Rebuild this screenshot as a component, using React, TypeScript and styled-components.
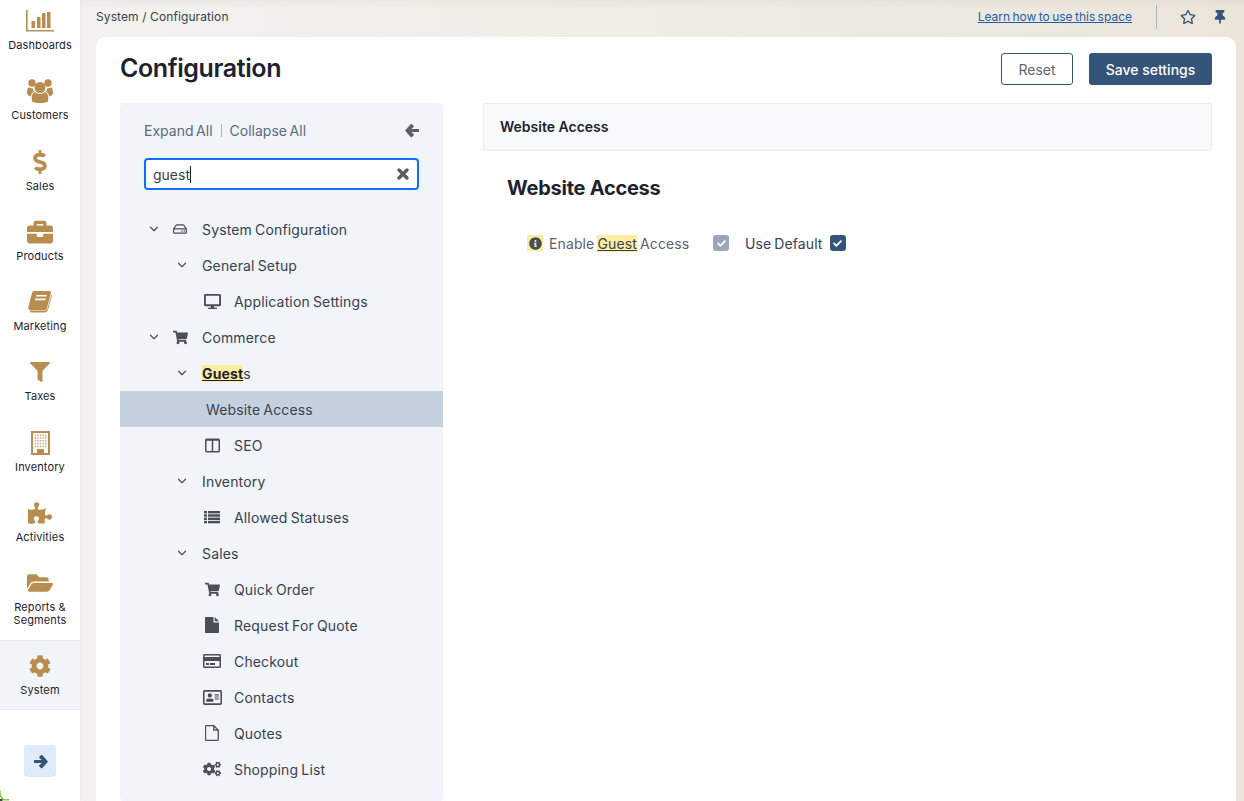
import React from "react";
import styled, { createGlobalStyle } from "styled-components";
import {
  FaDollarSign,
  FaBriefcase,
  FaFilter,
  FaPuzzlePiece,
  FaFolderOpen,
  FaCog,
  FaRegHdd,
  FaDesktop,
  FaShoppingCart,
  FaRegCreditCard,
  FaRegAddressCard,
  FaCogs,
  FaRegStar,
  FaThumbtack,
  FaInfoCircle,
  FaCheck,
} from "react-icons/fa";
import { LuChevronDown } from "react-icons/lu";

const GlobalStyle = createGlobalStyle`
  html, body {
    margin: 0;
    padding: 0;
    height: 100%;
    overflow: hidden;
  }
  body {
    font-family: "Inter", "Liberation Sans", sans-serif;
    color: #1c2230;
    background:
      linear-gradient(180deg, rgba(90, 80, 60, 0.05), rgba(90, 80, 60, 0) 8px),
      linear-gradient(90deg, #f4f3f0 0%, #efebe4 60%, #ebe5da 100%);
  }
`;

const Shell = styled.div`
  display: flex;
  height: 801px;
  overflow: hidden;
`;

const Sidebar = styled.aside`
  flex: 0 0 80px;
  background: #fff;
  display: flex;
  flex-direction: column;
  box-shadow: 1px 0 2px rgba(0, 0, 0, 0.03);
`;

const NavList = styled.nav`
  display: flex;
  flex-direction: column;
  padding-top: 5px;
`;

const NavItem = styled.div<{ $active?: boolean; $tall?: boolean }>`
  height: ${({ $active, $tall }) => ($active ? 70 : $tall ? 73 : 70.25)}px;
  box-sizing: border-box;
  display: flex;
  flex-direction: column;
  align-items: center;
  background: ${({ $active }) => ($active ? "#f1f4f9" : "transparent")};
  border-top: ${({ $active }) => ($active ? "1px solid #e6e9ee" : "0")};
  border-bottom: ${({ $active }) => ($active ? "1px solid #e6e9ee" : "0")};
  padding-top: ${({ $active }) => ($active ? 11 : 2)}px;
`;

const NavIcon = styled.div`
  height: 28px;
  display: flex;
  align-items: center;
  justify-content: center;
  color: #b98d50;
`;

const NavLabel = styled.div`
  margin-top: 4px;
  width: 78px;
  font-size: 11px;
  line-height: 13px;
  letter-spacing: 0.12px;
  text-align: center;
  color: #1c2230;
`;

const ExpandButton = styled.div`
  width: 32px;
  height: 32px;
  margin: 35px auto 0;
  border-radius: 4px;
  background: #deebf9;
  color: #34547a;
  display: flex;
  align-items: center;
  justify-content: center;
`;

const Content = styled.main`
  flex: 1;
  min-width: 0;
  padding: 0 8px 0 16px;
  display: flex;
  flex-direction: column;
`;

const TopBar = styled.header`
  height: 37px;
  flex: none;
  display: flex;
  align-items: center;
  justify-content: space-between;
  padding-bottom: 4px;
  box-sizing: border-box;
`;

const Breadcrumb = styled.div`
  font-size: 12px;
  letter-spacing: 0.1px;
  color: #39414f;
`;

const TopActions = styled.div`
  display: flex;
  align-items: center;
`;

const HelpLink = styled.a`
  font-size: 12px;
  color: #1f5ea8;
  text-decoration: underline;
  word-spacing: -1px;
`;

const Divider = styled.div`
  width: 1px;
  height: 24px;
  background: #a9b3c2;
  margin: 0 23px 0 24px;
`;

const TopIcon = styled.span<{ $last?: boolean }>`
  display: flex;
  color: #34547a;
  margin-right: ${({ $last }) => ($last ? "9px" : "17px")};
`;

const Card = styled.section`
  flex: 1;
  background: #fff;
  border-radius: 10px 10px 0 0;
  padding: 0 24px;
  display: flex;
  flex-direction: column;
  min-height: 0;
`;

const CardHeader = styled.div`
  height: 66px;
  flex: none;
  box-sizing: border-box;
  padding-bottom: 2px;
  display: flex;
  align-items: center;
  justify-content: space-between;
`;

const PageTitle = styled.h1`
  margin: 0 0 2px;
  font-size: 25px;
  font-weight: 600;
  letter-spacing: -0.4px;
  color: #1c2230;
`;

const ButtonRow = styled.div`
  display: flex;
  gap: 16px;
`;

const ResetButton = styled.button`
  width: 72px;
  height: 32px;
  border: 1px solid #34547a;
  border-radius: 3px;
  background: #fff;
  color: #5c6675;
  font: 14px "Inter", sans-serif;
`;

const SaveButton = styled.button`
  width: 123px;
  height: 32px;
  border: 0;
  border-radius: 3px;
  background: #34547a;
  color: #fff;
  font: 500 14px "Inter", sans-serif;
`;

const Columns = styled.div`
  flex: 1;
  display: flex;
  gap: 40px;
  min-height: 0;
`;

const TreePanel = styled.div`
  flex: 0 0 323px;
  background: #f1f4f9;
  border-radius: 4px;
  display: flex;
  flex-direction: column;
`;

const TreeTools = styled.div`
  display: flex;
  align-items: center;
  height: 55px;
  padding: 0 23px 0 24px;
`;

const ToolLink = styled.span`
  font-size: 14px;
  color: #5a6a80;
  word-spacing: -1.3px;
`;

const ToolSep = styled.span`
  width: 1px;
  height: 13px;
  background: #a9b3c2;
  margin: 0 8px;
`;

const BackIcon = styled.span`
  margin-left: auto;
  display: flex;
  color: #5a5f69;
`;

const SearchBox = styled.div`
  margin: 0 24px;
  height: 32px;
  box-sizing: border-box;
  border: 2px solid #0d6efd;
  border-radius: 4px;
  background: #fff;
  display: flex;
  align-items: center;
  padding: 0 8px 0 7px;
`;

const SearchText = styled.span`
  font-size: 14px;
  color: #39414f;
`;

const Caret = styled.span`
  width: 1px;
  height: 17px;
  background: #1c2230;
`;

const ClearIcon = styled.span`
  margin-left: auto;
  display: flex;
  color: #565b64;
`;

const Tree = styled.div`
  margin-top: 21px;
`;

const Row = styled.div<{ $indent: number; $selected?: boolean }>`
  height: 36px;
  display: flex;
  align-items: center;
  position: relative;
  background: ${({ $selected }) => ($selected ? "#c5d1df" : "transparent")};
  padding-left: ${({ $indent }) => $indent}px;
`;

const Chevron = styled.span<{ $level: number }>`
  position: absolute;
  display: flex;
  color: #4b5058;
  left: ${({ $level }) => ($level === 0 ? 27 : 55)}px;
`;

const RowIcon = styled.span<{ $level: number }>`
  position: absolute;
  display: flex;
  justify-content: center;
  width: 20px;
  left: ${({ $level }) => ($level === 2 ? 82 : 50)}px;
  color: #494e58;
`;

const RowLabel = styled.span`
  font-size: 14px;
  color: #39414f;
  letter-spacing: 0.15px;
  word-spacing: -1px;
  white-space: nowrap;
`;

const Match = styled.span`
  background: #fdeda0;
  font-weight: 700;
  color: #1c2230;
  text-decoration: underline;
`;

const MatchUnderlined = styled.span`
  background: #fdeda0;
  color: #39414f;
  text-decoration: underline;
`;

const Detail = styled.div`
  flex: 1;
  min-width: 0;
`;

const SectionBar = styled.div`
  height: 48px;
  box-sizing: border-box;
  display: flex;
  align-items: center;
  padding: 0 16px 1px;
  background: #f8f9fb;
  border: 1px solid #e9ecf0;
  border-radius: 3px;
  font-size: 14px;
  font-weight: 600;
  color: #1c2230;
`;

const SectionTitle = styled.h2`
  margin: 24px 0 0 24px;
  font-size: 20px;
  line-height: 26px;
  font-weight: 700;
  letter-spacing: -0.25px;
  color: #1c2230;
`;

const Field = styled.div`
  display: flex;
  align-items: center;
  margin: 34px 0 0 44px;
  height: 16px;
`;

const InfoMark = styled.span`
  width: 16px;
  height: 16px;
  background: #fdeda0;
  color: #494e58;
  display: flex;
  align-items: center;
  justify-content: center;
`;

const FieldLabel = styled.span`
  font-size: 14px;
  color: #5a6270;
  margin-left: 6px;
  letter-spacing: 0.12px;
  word-spacing: -1px;
  width: 164px;
  white-space: nowrap;
`;

const CheckBox = styled.span<{ $muted?: boolean }>`
  width: 16px;
  height: 16px;
  border-radius: 3px;
  background: ${({ $muted }) => ($muted ? "#9aa7ba" : "#34547a")};
  color: #fff;
  display: flex;
  align-items: center;
  justify-content: center;
`;

const DefaultLabel = styled.span`
  font-size: 14px;
  color: #39414f;
  margin: 0 7px 0 16px;
  letter-spacing: 0.1px;
  word-spacing: -1px;
`;

const CornerMark = styled.svg`
  position: fixed;
  left: 0;
  bottom: 0;
`;

const ChartIcon = () => (
  <svg width="28" height="22" viewBox="0 0 28 22" fill="#b98d50">
    <path d="M0 0h1.6v20H28v1.6H0z" />
    <rect x="5.5" y="11" width="3.5" height="7" />
    <rect x="11" y="7" width="3.5" height="11" />
    <rect x="16" y="3" width="3.5" height="15" />
    <rect x="21" y="2" width="3.5" height="16" />
  </svg>
);

const UsersIcon = () => (
  <svg width="26" height="24" viewBox="0 0 26 24" fill="#b98d50">
    <circle cx="5" cy="4" r="3.7" />
    <circle cx="21" cy="4" r="3.7" />
    <circle cx="13" cy="8.5" r="5.5" />
    <path d="M5 22.5c-1-6 .5-8.500 3-9.500 3 2.500 7 2.500 10 0 2.500 1 4 3.500 3 9.500-5 2-11 2-16 0z" />
    <path d="M0 14.500c-.3-4 .8-5.500 2-6.300 1 .9 2.400 1.300 3.700 1.100.2 1.300.7 2.400 1.500 3.300-2 1-3.200 2.800-3.400 5-1.800-.5-3-1.500-3.800-3.100z" />
    <path d="M26 14.500c.3-4-.8-5.500-2-6.300-1 .9-2.400 1.300-3.700 1.100-.2 1.300-.7 2.400-1.500 3.300 2 1 3.200 2.800 3.400 5 1.800-.5 3-1.500 3.800-3.100z" />
  </svg>
);

const BookIcon = () => (
  <svg width="24" height="22" viewBox="0 0 24 22" fill="#b98d50">
    <path
      fillRule="evenodd"
      d="M6 0h15.500c1.200 0 1.700 1 1.400 2L19 17c-.5 1.800-1.600 2.500-3.400 2.500H3C1 19.500 0 18 .4 16L4 2C4.300.8 5 0 6 0zM8.300 4l-.4 1.600h10.500l.4-1.600zM7.200 7.600l-.4 1.600h10.500l.4-1.600z"
    />
    <path d="M1.500 18.500c.5 1 1.100 1.500 2 1.500h12.500c1.900 0 2.900-.9 3.500-2.700l3.900-13.700.6.600-3.900 14.300c-.5 2-2 3-4 3H3.500c-1 0-1.900-1.400-2-3z" />
  </svg>
);

const BuildingIcon = () => {
  const windows = [];
  for (let r = 0; r < 5; r++) {
    for (let c = 0; c < 5; c++) {
      windows.push(<rect key={`${r}-${c}`} x={3.6 + c * 2.6} y={3.5 + r * 2.8} width="1.5" height="1.5" opacity="0.75" />);
    }
  }
  return (
    <svg width="19" height="24" viewBox="0 0 19 24" fill="#b98d50">
      <path fillRule="evenodd" d="M0 0h19v24H0zM2 2v20h4v-4h7v4h4V2z" />
      {windows}
    </svg>
  );
};

const ArrowIcon = ({ flip }: { flip?: boolean }) => (
  <svg width="15" height="15" viewBox="0 0 15 15" fill="currentColor" style={flip ? { transform: "scaleX(-1)" } : undefined}>
    <path d="M7 1.200l1.600 1.500c.4.4.4 1 0 1.400L6.200 5.900H14v3.200H6.200l2.400 1.900c.4.400.4 1 0 1.400L7 13.900c-.4.4-1 .4-1.400 0L.5 8.300c-.4-.4-.4-1 0-1.400l5.100-5.700c.4-.4 1-.4 1.400 0z" />
  </svg>
);

const ClearGlyph = () => (
  <svg width="12" height="12" viewBox="0 0 12 12" stroke="currentColor" strokeWidth="3.3" strokeLinecap="round">
    <path d="M2 2l8 8M10 2l-8 8" />
  </svg>
);

const ColumnsGlyph = () => (
  <svg width="15" height="15" viewBox="0 0 15 15" fill="none" stroke="currentColor" strokeWidth="1.5">
    <rect x="0.75" y="1.25" width="13.5" height="12.5" rx="1" />
    <path d="M7.5 1.500v12M1 2h13" />
  </svg>
);

const ListGlyph = () => (
  <svg width="16" height="13" viewBox="0 0 16 13" fill="currentColor">
    {[0, 3.3, 6.6, 9.9].map((y) => (
      <g key={y}>
        <rect x="0" y={y} width="3" height="2.4" />
        <rect x="4" y={y} width="12" height="2.4" />
      </g>
    ))}
  </svg>
);

const FileGlyph = () => (
  <svg width="14" height="16" viewBox="0 0 14 16" fill="currentColor">
    <path d="M1 0h7.500v5.500H14V15c0 .6-.4 1-1 1H1c-.6 0-1-.4-1-1V1c0-.6.4-1 1-1zM9.700 0L14 4.300H9.700z" />
  </svg>
);

const FileOutlineGlyph = () => (
  <svg width="14" height="16" viewBox="0 0 14 16" fill="none" stroke="currentColor" strokeWidth="1.3">
    <path d="M1.500.7h7.300l4.500 4.500v9.100c0 .6-.4 1-1 1H1.500c-.6 0-1-.4-1-1V1.700c0-.6.4-1 1-1z" />
    <path d="M8.800.7v4.500h4.500" />
  </svg>
);

const navItems = [
  { label: "Dashboards", icon: <ChartIcon /> },
  { label: "Customers", icon: <UsersIcon /> },
  { label: "Sales", icon: <FaDollarSign size={24} /> },
  { label: "Products", icon: <FaBriefcase size={26} /> },
  { label: "Marketing", icon: <BookIcon /> },
  { label: "Taxes", icon: <FaFilter size={20} /> },
  { label: "Inventory", icon: <BuildingIcon /> },
  { label: "Activities", icon: <FaPuzzlePiece size={24} /> },
  { label: "Reports & Segments", icon: <FaFolderOpen size={26} />, tall: true },
  { label: "System", icon: <FaCog size={22} />, active: true },
];

type TreeRow = {
  label: React.ReactNode;
  level: number;
  chevron?: boolean;
  icon?: React.ReactNode;
  selected?: boolean;
};

const treeRows: TreeRow[] = [
  { label: "System Configuration", level: 0, chevron: true, icon: <FaRegHdd size={14} /> },
  { label: "General Setup", level: 1, chevron: true },
  { label: "Application Settings", level: 2, icon: <FaDesktop size={17} /> },
  { label: "Commerce", level: 0, chevron: true, icon: <FaShoppingCart size={15} /> },
  {
    label: (
      <>
        <Match>Guest</Match>s
      </>
    ),
    level: 1,
    chevron: true,
  },
  { label: "Website Access", level: 2, selected: true },
  { label: "SEO", level: 2, icon: <ColumnsGlyph /> },
  { label: "Inventory", level: 1, chevron: true },
  { label: "Allowed Statuses", level: 2, icon: <ListGlyph /> },
  { label: "Sales", level: 1, chevron: true },
  { label: "Quick Order", level: 2, icon: <FaShoppingCart size={15} /> },
  { label: "Request For Quote", level: 2, icon: <FileGlyph /> },
  { label: "Checkout", level: 2, icon: <FaRegCreditCard size={18} /> },
  { label: "Contacts", level: 2, icon: <FaRegAddressCard size={19} /> },
  { label: "Quotes", level: 2, icon: <FileOutlineGlyph /> },
  { label: "Shopping List", level: 2, icon: <FaCogs size={18} /> },
];

const rowIndent = (row: TreeRow) => {
  if (row.selected) return 86;
  return row.level === 2 ? 114 : 82;
};

export default function App() {
  return (
    <>
      <GlobalStyle />
      <Shell>
        <Sidebar>
          <NavList>
            {navItems.map((item) => (
              <NavItem key={item.label} $active={item.active} $tall={item.tall}>
                <NavIcon>{item.icon}</NavIcon>
                <NavLabel>{item.label}</NavLabel>
              </NavItem>
            ))}
          </NavList>
          <ExpandButton>
            <ArrowIcon flip />
          </ExpandButton>
        </Sidebar>
        <Content>
          <TopBar>
            <Breadcrumb>System / Configuration</Breadcrumb>
            <TopActions>
              <HelpLink>Learn how to use this space</HelpLink>
              <Divider />
              <TopIcon>
                <FaRegStar size={16} />
              </TopIcon>
              <TopIcon $last>
                <FaThumbtack size={14} />
              </TopIcon>
            </TopActions>
          </TopBar>
          <Card>
            <CardHeader>
              <PageTitle>Configuration</PageTitle>
              <ButtonRow>
                <ResetButton>Reset</ResetButton>
                <SaveButton>Save settings</SaveButton>
              </ButtonRow>
            </CardHeader>
            <Columns>
              <TreePanel>
                <TreeTools>
                  <ToolLink>Expand All</ToolLink>
                  <ToolSep />
                  <ToolLink>Collapse All</ToolLink>
                  <BackIcon>
                    <ArrowIcon />
                  </BackIcon>
                </TreeTools>
                <SearchBox>
                  <SearchText>guest</SearchText>
                  <Caret />
                  <ClearIcon>
                    <ClearGlyph />
                  </ClearIcon>
                </SearchBox>
                <Tree>
                  {treeRows.map((row, i) => (
                    <Row key={i} $indent={rowIndent(row)} $selected={row.selected}>
                      {row.chevron && (
                        <Chevron $level={row.level}>
                          <LuChevronDown size={14} />
                        </Chevron>
                      )}
                      {row.icon && <RowIcon $level={row.level}>{row.icon}</RowIcon>}
                      <RowLabel>{row.label}</RowLabel>
                    </Row>
                  ))}
                </Tree>
              </TreePanel>
              <Detail>
                <SectionBar>Website Access</SectionBar>
                <SectionTitle>Website Access</SectionTitle>
                <Field>
                  <InfoMark>
                    <FaInfoCircle size={13} />
                  </InfoMark>
                  <FieldLabel>
                    Enable <MatchUnderlined>Guest</MatchUnderlined> Access
                  </FieldLabel>
                  <CheckBox $muted>
                    <FaCheck size={9} />
                  </CheckBox>
                  <DefaultLabel>Use Default</DefaultLabel>
                  <CheckBox>
                    <FaCheck size={9} />
                  </CheckBox>
                </Field>
              </Detail>
            </Columns>
          </Card>
        </Content>
      </Shell>
      <CornerMark width="9" height="11" viewBox="0 0 9 11" fill="none">
        <path d="M0 0.5v4c.5 2.500 2 4 4 5.300h5" stroke="#8cc63f" strokeWidth="1.5" />
        <path d="M0 9h2.500v2H0z" fill="#3c4a30" />
      </CornerMark>
    </>
  );
}
